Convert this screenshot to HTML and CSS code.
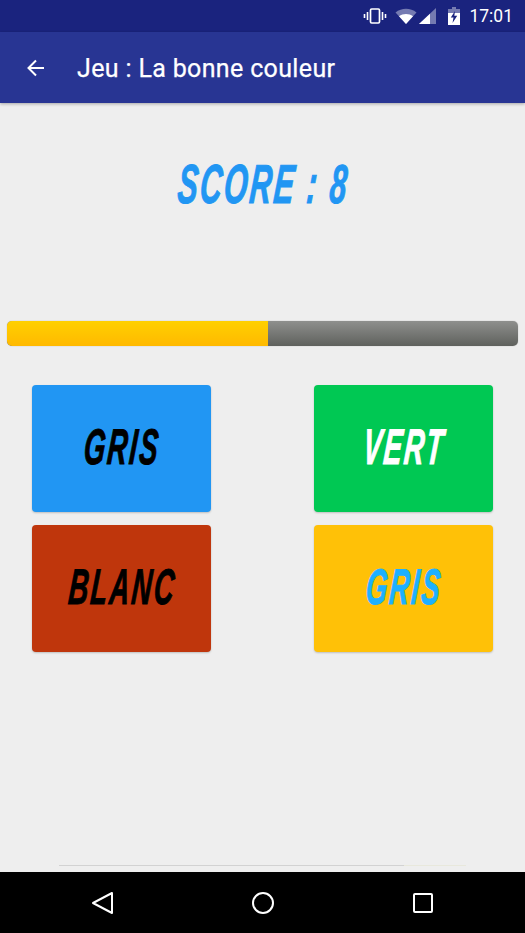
FILE: index.html
```html
<!DOCTYPE html>
<html lang="fr">
<head>
  <meta charset="UTF-8" />
  <meta name="viewport" content="width=device-width, initial-scale=1.0"/>
  <title>Jeu : La bonne couleur</title>
  <link rel="stylesheet" href="styles.css">
</head>
<body>
  <div class="phone">
    <div class="status-bar">
      <svg class="icon-vibrate" width="24" height="16" viewBox="0 0 24 16">
        <rect x="7.5" y="1" width="9" height="14" rx="1.2" fill="none" stroke="#fff" stroke-width="1.7"/>
        <path d="M4.5 4v8M1.5 6v4M19.500 4v8M22.500 6v4" stroke="#fff" stroke-width="1.6" fill="none"/>
      </svg>
      <svg class="icon-wifi" width="22" height="16" viewBox="0 0 22 16">
        <path d="M0.500 4.500C6.500 -0.500 15.500 -0.500 21.500 4.500L11 16Z" fill="#fff" opacity="0.4"/>
        <path d="M4 8.300C8 5.200 14 5.200 18 8.300L11 16Z" fill="#fff"/>
      </svg>
      <svg class="icon-signal" width="18" height="16" viewBox="0 0 18 16">
        <path d="M0 16L17 0V16Z" fill="#fff" opacity="0.4"/>
        <path d="M0 16L11 5.700V16Z" fill="#fff"/>
      </svg>
      <svg class="icon-battery" width="12" height="18" viewBox="0 0 12 18">
        <path d="M4 0H8V2H12V6H0V2H4Z" fill="#fff" opacity="0.4"/>
        <path d="M0 6H12V18H0Z" fill="#fff"/>
        <path d="M7 4L2.800 10.500H5.500L4.500 16L9.200 8.800H6.300Z" fill="#1a237e"/>
      </svg>
      <span class="clock">17:01</span>
    </div>

    <div class="toolbar">
      <svg class="back-arrow" width="24" height="24" viewBox="0 0 24 24">
        <path d="M20 12H5M12 4.500L4.500 12L12 19.500" fill="none" stroke="#fff" stroke-width="2"/>
      </svg>
      <h1 class="title">Jeu : La bonne couleur</h1>
    </div>

    <div class="content">
      <div class="score"><span class="squeeze">SCORE : 8</span></div>

      <div class="progress">
        <div class="progress-fill"></div>
      </div>

      <div class="choices">
        <div class="choice bg-blue text-black"><span class="squeeze">GRIS</span></div>
        <div class="choice bg-green text-white"><span class="squeeze">VERT</span></div>
        <div class="choice bg-red text-black"><span class="squeeze">BLANC</span></div>
        <div class="choice bg-amber text-blue"><span class="squeeze">GRIS</span></div>
      </div>

      <div class="bottom-line"></div>
    </div>

    <div class="nav-bar">
      <svg width="24" height="24" viewBox="0 0 24 24">
        <path d="M21 2V22L2 12Z" fill="none" stroke="#fff" stroke-width="2" stroke-linejoin="round"/>
      </svg>
      <svg width="24" height="24" viewBox="0 0 24 24">
        <circle cx="12" cy="12" r="10" fill="none" stroke="#fff" stroke-width="2"/>
      </svg>
      <svg width="24" height="24" viewBox="0 0 24 24">
        <rect x="3" y="3" width="18" height="18" rx="1" fill="none" stroke="#fff" stroke-width="2"/>
      </svg>
    </div>
  </div>
</body>
</html>
```

FILE: styles.css
```css
html,
body {
  margin: 0;
  padding: 0;
}

body {
  font-family: Roboto, "Liberation Sans", sans-serif;
  background-color: #eeeeee;
}

.phone {
  width: 525px;
  height: 933px;
  display: flex;
  flex-direction: column;
  overflow: hidden;
}

.status-bar {
  height: 32px;
  flex-shrink: 0;
  background-color: #1a237e;
  display: flex;
  align-items: center;
  justify-content: flex-end;
  padding-right: 12px;
  box-sizing: border-box;
  color: #fff;
}

.icon-vibrate {
  margin-right: 8px;
}

.icon-signal {
  margin-left: 2px;
  margin-right: 11px;
}

.clock {
  font-size: 17.5px;
  margin-left: 9px;
}

.toolbar {
  height: 71px;
  flex-shrink: 0;
  background-color: #283593;
  display: flex;
  align-items: center;
  padding-left: 24px;
  box-shadow: 0 1px 3px rgba(0, 0, 0, 0.3);
  position: relative;
}

.title {
  margin: 2px 0 0 29px;
  font-size: 25px;
  font-weight: 400;
  letter-spacing: 0.35px;
  color: #fff;
  -webkit-text-stroke: 0.25px #fff;
}

.content {
  flex: 1;
  display: flex;
  flex-direction: column;
  align-items: center;
}

.score,
.choice {
  font-family: "Liberation Sans", sans-serif;
  font-weight: 700;
  font-style: italic;
}

/* no condensed face installed, so narrow the glyphs by hand */
.squeeze {
  display: inline-block;
  padding-left: 4px;
  transform: skewX(-5deg) scaleX(0.55);
  letter-spacing: 4px;
  -webkit-text-stroke: 1px currentColor;
}

.score {
  margin-top: 51px;
  height: 60px;
  line-height: 60px;
  font-size: 55px;
  color: #2196f3;
}

.progress {
  width: 511px;
  height: 25px;
  margin-top: 107px;
  border-radius: 5px;
  background: linear-gradient(#8e8f8d, #5f615d);
  box-shadow: 0 0 1px rgba(0, 0, 0, 0.35);
  overflow: hidden;
}

.progress-fill {
  width: 51%;
  height: 100%;
  background: linear-gradient(#ffd000, #ffb900);
}

.choices {
  width: 461px;
  margin-top: 39px;
  display: grid;
  grid-template-columns: 179px 179px;
  grid-auto-rows: 127px;
  justify-content: space-between;
  row-gap: 13px;
}

.choice {
  display: flex;
  align-items: center;
  justify-content: center;
  padding-bottom: 3px;
  box-sizing: border-box;
  border-radius: 4px;
  font-size: 50px;
  box-shadow: 0 1px 2px rgba(0, 0, 0, 0.2);
}

.bg-blue { background-color: #2196f3; }
.bg-green { background-color: #00c853; }
.bg-red { background-color: #bf360c; }
.bg-amber { background-color: #ffc107; }

.text-black { color: #000; }
.text-white { color: #fff; }
.text-blue { color: #1eb0ff; }

.bottom-line {
  width: 407px;
  height: 1px;
  margin-top: auto;
  margin-bottom: 6px;
  background: linear-gradient(to right, #d2d2d2 84.7%, #e8e8dc 84.7%);
}

.nav-bar {
  height: 61px;
  flex-shrink: 0;
  background-color: #000;
  display: flex;
  align-items: center;
  justify-content: center;
  gap: 136px;
}
```
